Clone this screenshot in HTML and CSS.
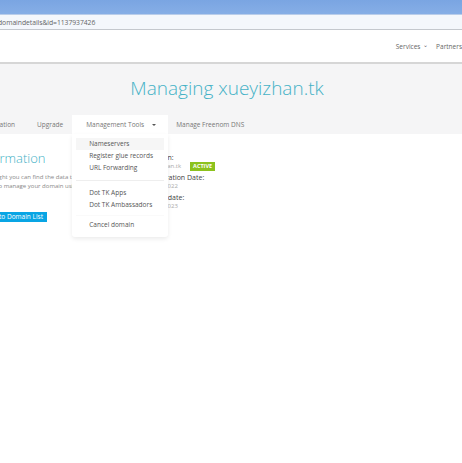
FILE: index.html
```html
<!DOCTYPE html>
<html lang="en">
<head>
<meta charset="utf-8">
<title>Managing xueyizhan.tk</title>
<link rel="stylesheet" href="styles.css">
</head>
<body>
<div class="chrome-top"></div>
<div class="addr"><span class="url">domaindetails&amp;id=1137937426</span></div>
<header class="topbar">
  <nav class="topnav">
    <span class="topnav-item">Services <span class="chev">&#8964;</span></span>
    <span class="topnav-item">Partners</span>
  </nav>
</header>
<section class="band">
  <h1 class="title">Managing xueyizhan.tk</h1>
  <nav class="tabs">
    <span class="tab tab-info">Information</span>
    <span class="tab tab-upgrade">Upgrade</span>
    <span class="tab tab-active">Management Tools <span class="caret"></span>
      <ul class="dropdown">
        <li class="dd-item dd-hover">Nameservers</li>
        <li class="dd-item">Register glue records</li>
        <li class="dd-item">URL Forwarding</li>
        <li class="dd-divider"></li>
        <li class="dd-item">Dot TK Apps</li>
        <li class="dd-item">Dot TK Ambassadors</li>
        <li class="dd-divider dd-divider-faint"></li>
        <li class="dd-item">Cancel domain</li>
      </ul>
    </span>
    <span class="tab">Manage Freenom DNS</span>
  </nav>
</section>
<main class="content">
  <div class="col-left">
    <h2 class="info-title">Information</h2>
    <p class="info-text">On the right you can find the data that you need<br>wanted to manage your domain using our tools.</p>
    <span class="btn">Back to Domain List</span>
  </div>
  <div class="col-right">
    <div class="field">
      <div class="label">Domain:</div>
      <div class="value">xueyizhan.tk <span class="badge">ACTIVE</span></div>
    </div>
    <div class="field">
      <div class="label">Registration Date:</div>
      <div class="value">05/12/2022</div>
    </div>
    <div class="field">
      <div class="label">Expiry date:</div>
      <div class="value">05/12/2023</div>
    </div>
  </div>
</main>
</body>
</html>
```
FILE: styles.css
```css
* { box-sizing: border-box; }
html, body { margin: 0; padding: 0; }
body {
  width: 462px;
  height: 463px;
  overflow: hidden;
  background: #ffffff;
  font-family: "Open Sans", "DejaVu Sans", sans-serif;
  color: #555;
}
.chrome-top {
  height: 14px;
  background: linear-gradient(#7aa5e2, #86aee6);
}
.addr {
  height: 16px;
  background: #f4f7fc;
  border-top: 1px solid #b9cdea;
  border-bottom: 1px solid #c4c8ce;
  display: flex;
  align-items: center;
}
.url {
  font-size: 6.8px;
  color: #666;
  margin-left: -2px;
  letter-spacing: -0.05px;
}
.topbar {
  height: 34px;
  background: #fff;
  border-bottom: 2px solid #d6d6d6;
  display: flex;
  justify-content: flex-end;
  align-items: center;
  overflow: hidden;
}
.topnav {
  display: flex;
  gap: 8px;
  margin-right: 0;
  padding-top: 1px;
}
.topnav-item {
  font-size: 6.5px;
  color: #666;
  white-space: nowrap;
}
.chev { font-size: 6px; position: relative; top: -2px; margin-left: 1px; }
.band {
  background: #f5f5f6;
  height: 70px;
  padding-top: 9px;
}
.title {
  margin: 0;
  text-align: center;
  font-weight: 300;
  font-size: 19px;
  line-height: 30px;
  color: #45b2c6;
  padding-right: 8px;
}
.tabs {
  display: flex;
  align-items: stretch;
  margin-top: 12px;
  margin-left: -21px;
  height: 19px;
}
.tab {
  position: relative;
  font-size: 6.5px;
  color: #777;
  display: flex;
  align-items: center;
  white-space: nowrap;
}
.tab-info { margin-right: 22px; }
.tab-upgrade { margin-right: 9px; }
.tab-active {
  background: #fff;
  padding: 0 11px 0 14px;
  margin-right: 8px;
  width: 96px;
}
.caret {
  display: inline-block;
  width: 0; height: 0;
  border-left: 2px solid transparent;
  border-right: 2px solid transparent;
  border-top: 2.5px solid #555;
  margin-left: 8px;
}
.dropdown {
  position: absolute;
  left: 0;
  top: 19px;
  width: 96px;
  margin: 0;
  padding: 4px 4px 6px;
  list-style: none;
  background: #fff;
  box-shadow: 0 2px 4px rgba(0,0,0,0.08);
  border-radius: 0 0 3px 3px;
  z-index: 5;
}
.dd-item {
  font-size: 6.5px;
  color: #555;
  line-height: 12px;
  padding-left: 13px;
  white-space: nowrap;
}
.dd-hover { background: #f6f6f6; }
.dd-divider {
  height: 1px;
  background: #eee;
  margin: 6px 0 6px;
}
.dd-divider-faint {
  background: #fafafa;
  margin: 4px 0 3px;
}
.content {
  display: flex;
  padding-top: 15px;
  margin-left: -28px;
}
.col-left { width: 174px; }
.info-title {
  margin: 0 0 0 5px;
  font-weight: 300;
  font-size: 13px;
  line-height: 18px;
  color: #45b2c6;
}
.info-text {
  margin: 6px 0 0 2px;
  font-size: 6px;
  line-height: 9px;
  color: #888;
  white-space: nowrap;
}
.btn {
  display: inline-block;
  margin-top: 21px;
  margin-left: 7px;
  background: #09a5e4;
  color: #fff;
  font-size: 6.5px;
  line-height: 10px;
  padding: 0 4px;
}
.col-right {
  display: flex;
  flex-direction: column;
  gap: 2px;
  margin-top: 4px;
}
.label {
  font-size: 7px;
  line-height: 9px;
  color: #444;
  white-space: nowrap;
}
.value {
  font-size: 6px;
  line-height: 9px;
  color: #aaa;
  white-space: nowrap;
  display: flex;
  align-items: center;
}
.badge {
  display: inline-block;
  background: #8cc21d;
  color: #fff;
  font-weight: 700;
  font-size: 5.5px;
  line-height: 9px;
  padding: 0 3px;
  margin-left: 9px;
}
```
